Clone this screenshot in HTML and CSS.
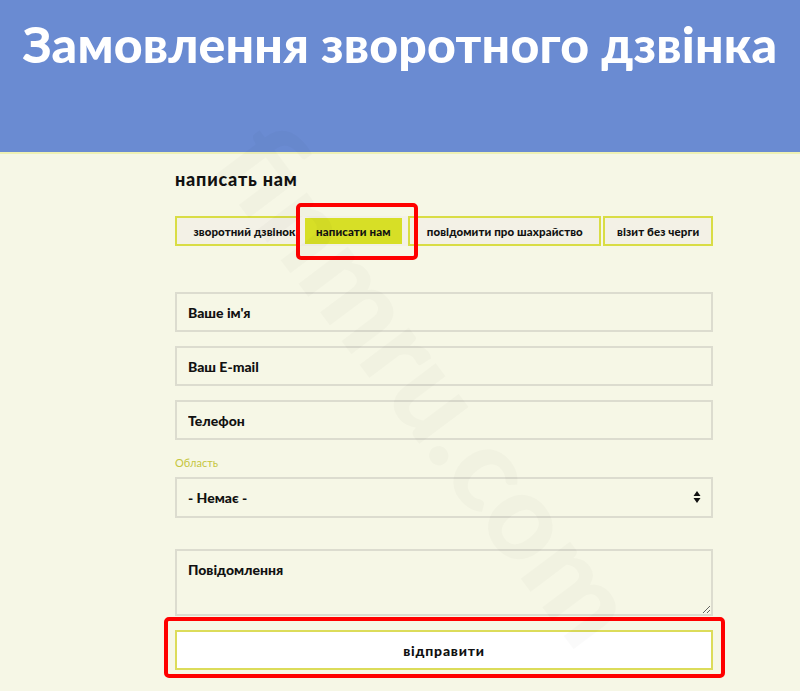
FILE: index.html
```html
<!DOCTYPE html>
<html lang="uk">
<head>
  <meta charset="UTF-8" />
  <meta name="viewport" content="width=device-width, initial-scale=1.0"/>
  <title>Замовлення зворотного дзвінка</title>
  <link rel="stylesheet" href="styles.css">
</head>
<body>
  <header class="page-header">
    <h1>Замовлення зворотного дзвінка</h1>
  </header>

  <main class="content">
    <h2>написать нам</h2>

    <div class="tabs">
      <a class="tab tab-first" href="#">зворотний дзвінок</a>
      <a class="tab tab-active" href="#">написати нам</a>
      <a class="tab" href="#">повідомити про шахрайство</a>
      <a class="tab" href="#">візит без черги</a>
    </div>

    <form class="contact-form" action="#" method="POST">
      <input type="text" name="name" placeholder="Ваше ім'я" />
      <input type="email" name="email" placeholder="Ваш E-mail" />
      <input type="text" name="phone" placeholder="Телефон" />

      <label class="field-label" for="region">Область</label>
      <div class="select-wrap">
        <select name="region" id="region">
          <option value="">- Немає -</option>
        </select>
        <span class="select-arrows">
          <svg width="8" height="16" viewBox="0 0 8 16"><path d="M4 2 L7.5 7 H0.5 Z M4 14 L7.5 9 H0.5 Z" fill="#111"/></svg>
        </span>
      </div>

      <textarea name="message" placeholder="Повідомлення"></textarea>

      <button type="submit">відправити</button>
    </form>
  </main>

  <div class="mark mark-tab"></div>
  <div class="mark mark-submit"></div>
  <div class="watermark">finmru.com</div>
</body>
</html>
```

FILE: styles.css
```css
* {
  box-sizing: border-box;
}

body {
  margin: 0;
  background: #f6f7e6;
  font-family: Lato, 'Noto Sans', sans-serif;
  color: #111;
  min-height: 691px;
  position: relative;
  overflow: hidden;
}

.page-header {
  height: 154px;
  background: #6a8bd2;
  border-bottom: 2px solid #eef1b4;
  padding-top: 16px;
}

.page-header h1 {
  margin: 0;
  text-align: center;
  color: #fff;
  font-size: 50px;
  font-weight: 900;
  letter-spacing: 0.2px;
  line-height: 56px;
}

.content {
  width: 538px;
  margin-left: 175px;
  padding-top: 13px;
}

h2 {
  margin: 0;
  font-size: 18px;
  font-weight: 900;
  line-height: 24px;
  letter-spacing: 0.8px;
}

.tabs {
  display: flex;
  margin-top: 25px;
  height: 30px;
}

.tab {
  display: flex;
  align-items: center;
  justify-content: center;
  border: 2px solid #d9dd45;
  background: #f3f1e6;
  color: #111;
  text-decoration: none;
  font-size: 11.5px;
  font-weight: 900;
  letter-spacing: 0.1px;
  white-space: nowrap;
  overflow: hidden;
}

.tab-first {
  width: 124px;
  justify-content: flex-end;
  padding-right: 1px;
}

.tab-active {
  width: 110px;
  background: #d7df26;
  border-color: #f3f1e6;
  border-width: 2px 6px 2px 6px;
}

.tab:nth-child(3) {
  width: 194px;
}

.tab:nth-child(4) {
  width: 110px;
  margin-left: 2px;
}

.contact-form {
  display: flex;
  flex-direction: column;
  margin-top: 46px;
}

input, select, textarea {
  width: 100%;
  border: 2px solid #dcdccf;
  background: #f6f7e6;
  font-family: Lato, 'Noto Sans', sans-serif;
  font-size: 14px;
  font-weight: 900;
  color: #111;
  padding: 0 11px;
  outline: none;
}

input {
  height: 40px;
  margin-bottom: 14px;
}

input::placeholder, textarea::placeholder {
  color: #111;
  opacity: 1;
}

.field-label {
  margin-top: 2px;
  font-size: 11px;
  color: #c5c640;
  line-height: 14px;
}

.select-wrap {
  position: relative;
  margin-top: 7px;
}

select {
  height: 41px;
  appearance: none;
  -webkit-appearance: none;
}

.select-arrows {
  position: absolute;
  right: 12px;
  top: 12px;
  pointer-events: none;
}

textarea {
  height: 67px;
  margin-top: 31px;
  padding-top: 10px;
  resize: vertical;
}

button {
  height: 40px;
  margin-top: 14px;
  background: #fff;
  border: 2px solid #dcdc5a;
  font-family: Lato, 'Noto Sans', sans-serif;
  font-size: 14px;
  font-weight: 900;
  letter-spacing: 0.8px;
  color: #111;
  cursor: pointer;
}

.mark {
  position: absolute;
  border: 4px solid #ff0000;
  border-radius: 5px;
  pointer-events: none;
}

.mark-tab {
  left: 296px;
  top: 203px;
  width: 122px;
  height: 57px;
}

.mark-submit {
  left: 164px;
  top: 617px;
  width: 561px;
  height: 61px;
}

.watermark {
  position: absolute;
  left: 90px;
  top: 310px;
  width: 680px;
  text-align: center;
  font-size: 120px;
  font-weight: 900;
  color: rgba(0, 0, 0, 0.018);
  transform: rotate(53deg);
  pointer-events: none;
  white-space: nowrap;
}
```
